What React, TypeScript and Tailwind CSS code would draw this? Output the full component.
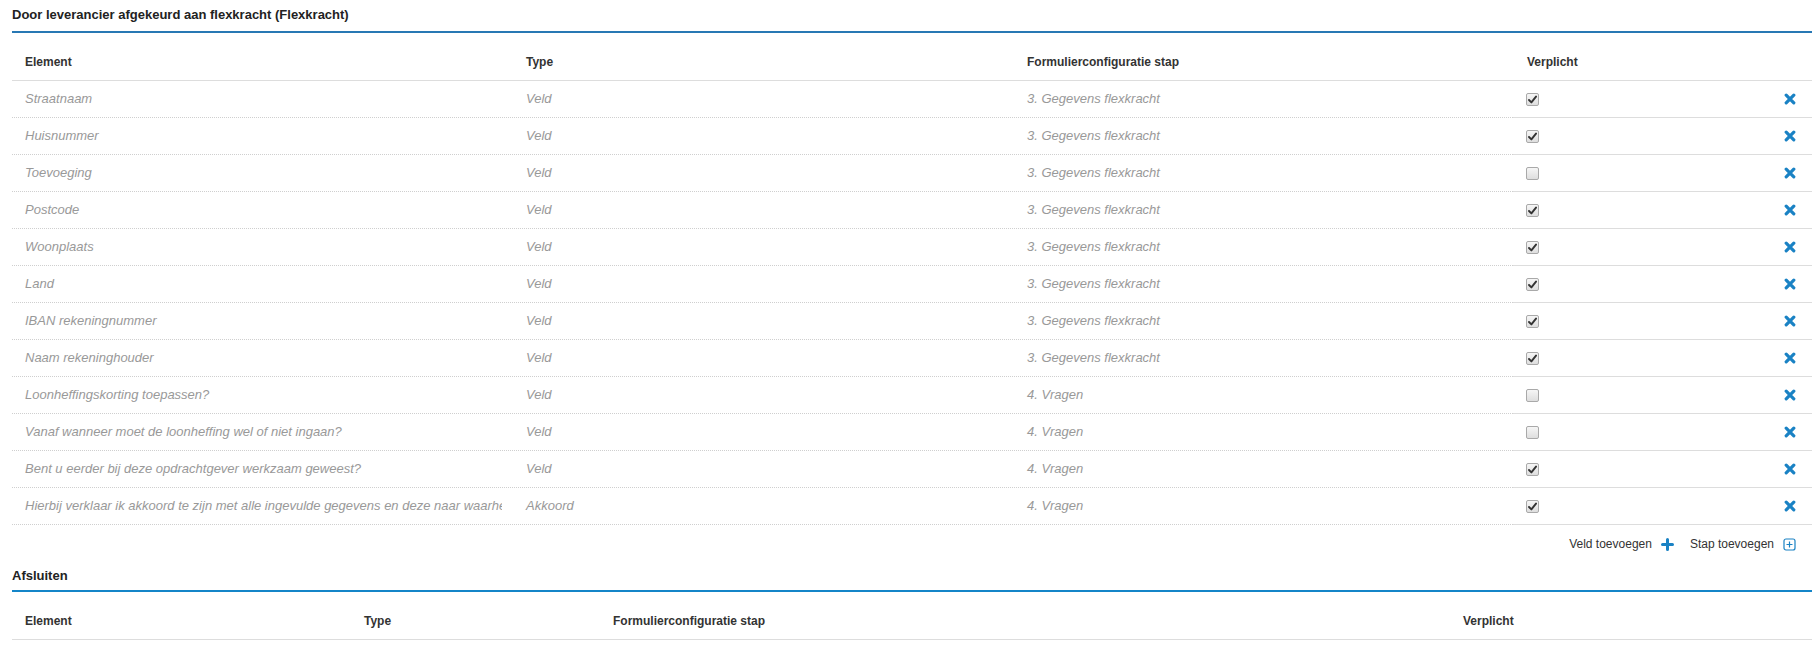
import React from 'react';

type Row = { element: string; type: string; step: string; required: boolean };

const rows: Row[] = [
  { element: 'Straatnaam', type: 'Veld', step: '3. Gegevens flexkracht', required: true },
  { element: 'Huisnummer', type: 'Veld', step: '3. Gegevens flexkracht', required: true },
  { element: 'Toevoeging', type: 'Veld', step: '3. Gegevens flexkracht', required: false },
  { element: 'Postcode', type: 'Veld', step: '3. Gegevens flexkracht', required: true },
  { element: 'Woonplaats', type: 'Veld', step: '3. Gegevens flexkracht', required: true },
  { element: 'Land', type: 'Veld', step: '3. Gegevens flexkracht', required: true },
  { element: 'IBAN rekeningnummer', type: 'Veld', step: '3. Gegevens flexkracht', required: true },
  { element: 'Naam rekeninghouder', type: 'Veld', step: '3. Gegevens flexkracht', required: true },
  { element: 'Loonheffingskorting toepassen?', type: 'Veld', step: '4. Vragen', required: false },
  { element: 'Vanaf wanneer moet de loonheffing wel of niet ingaan?', type: 'Veld', step: '4. Vragen', required: false },
  { element: 'Bent u eerder bij deze opdrachtgever werkzaam geweest?', type: 'Veld', step: '4. Vragen', required: true },
  {
    element: 'Hierbij verklaar ik akkoord te zijn met alle ingevulde gegevens en deze naar waarheid te hebben ingevuld',
    type: 'Akkoord',
    step: '4. Vragen',
    required: true
  }
];

function Checkbox({ checked }: { checked: boolean }) {
  return (
    <span className="flex h-[13px] w-[13px] items-center justify-center rounded-[2px] border border-[#a9a9a9] bg-gradient-to-b from-[#f6f6f6] to-[#dedede]">
      {checked && (
        <svg width="9" height="9" viewBox="0 0 9 9">
          <path d="M1 5 L3.4 7.4 L8 1.6" fill="none" stroke="#333" strokeWidth="1.9" strokeLinecap="round" strokeLinejoin="round" />
        </svg>
      )}
    </span>
  );
}

function RemoveIcon() {
  return (
    <svg width="12" height="12" viewBox="0 0 12 12">
      <path d="M2.2 2.2 L9.8 9.8 M9.8 2.2 L2.2 9.8" stroke="#1a82c4" strokeWidth="3.2" strokeLinecap="round" />
    </svg>
  );
}

export default function App() {
  return (
    <div className="min-h-[646px] w-[1818px] bg-white px-[12px] text-[#333]" style={{ fontFamily: '"Liberation Sans", Arial, sans-serif' }}>
      <div className="w-[1800px]">
        <h2 className="flex h-[33px] items-center border-b-2 border-[#2878b4] text-[13px] font-bold text-[#222]">
          <span className="-mt-[1px]">Door leverancier afgekeurd aan flexkracht (Flexkracht)</span>
        </h2>

        <div className="flex h-[48px] items-end border-b border-[#ddd] pb-[9px] text-[12px] font-bold leading-[18px]">
          <div className="w-[501px] pl-[13px]">Element</div>
          <div className="w-[501px] pl-[13px]">Type</div>
          <div className="w-[500px] pl-[13px]">Formulierconfiguratie stap</div>
          <div className="flex-1 pl-[13px]">Verplicht</div>
        </div>

        {rows.map((r) => (
          <div key={r.element} className="flex h-[37px] text-[13px] italic text-[#999]">
            <div className="flex w-[1501px] border-b border-dotted border-[#cfcfcf]">
              <div className="flex w-[501px] items-center pl-[13px] pr-[11px]">
                <span className="block w-full overflow-hidden whitespace-nowrap">{r.element}</span>
              </div>
              <div className="flex w-[501px] items-center pl-[13px]">{r.type}</div>
              <div className="flex w-[499px] items-center pl-[13px]">{r.step}</div>
            </div>
            <div className="flex flex-1 items-center justify-between border-b border-[#ddd] pl-[13px] pr-[16px]">
              <Checkbox checked={r.required} />
              <RemoveIcon />
            </div>
          </div>
        ))}

        <div className="flex h-[38px] items-center justify-end pr-[16px] text-[12px]">
          <span>Veld toevoegen</span>
          <svg className="ml-[9px]" width="13" height="13" viewBox="0 0 13 13">
            <path d="M6.5 1.5 V11.5 M1.5 6.5 H11.5" stroke="#1a82c4" strokeWidth="3" strokeLinecap="round" />
          </svg>
          <span className="ml-[16px]">Stap toevoegen</span>
          <svg className="ml-[9px]" width="13" height="13" viewBox="0 0 13 13">
            <rect x="1" y="1" width="11" height="11" rx="2" fill="none" stroke="#1a82c4" strokeWidth="1.2" />
            <path d="M6.5 3.5 V9.5 M3.5 6.5 H9.5" stroke="#1a82c4" strokeWidth="1.2" />
          </svg>
        </div>

        <h2 className="flex h-[29px] items-center border-b-2 border-[#1485c8] text-[13px] font-bold text-[#222]">
          <span className="-mt-[2px]">Afsluiten</span>
        </h2>

        <div className="flex h-[48px] items-end border-b border-[#ddd] pb-[9px] text-[12px] font-bold leading-[18px]">
          <div className="w-[339px] pl-[13px]">Element</div>
          <div className="w-[249px] pl-[13px]">Type</div>
          <div className="w-[850px] pl-[13px]">Formulierconfiguratie stap</div>
          <div className="flex-1 pl-[13px]">Verplicht</div>
        </div>
      </div>
    </div>
  );
}
